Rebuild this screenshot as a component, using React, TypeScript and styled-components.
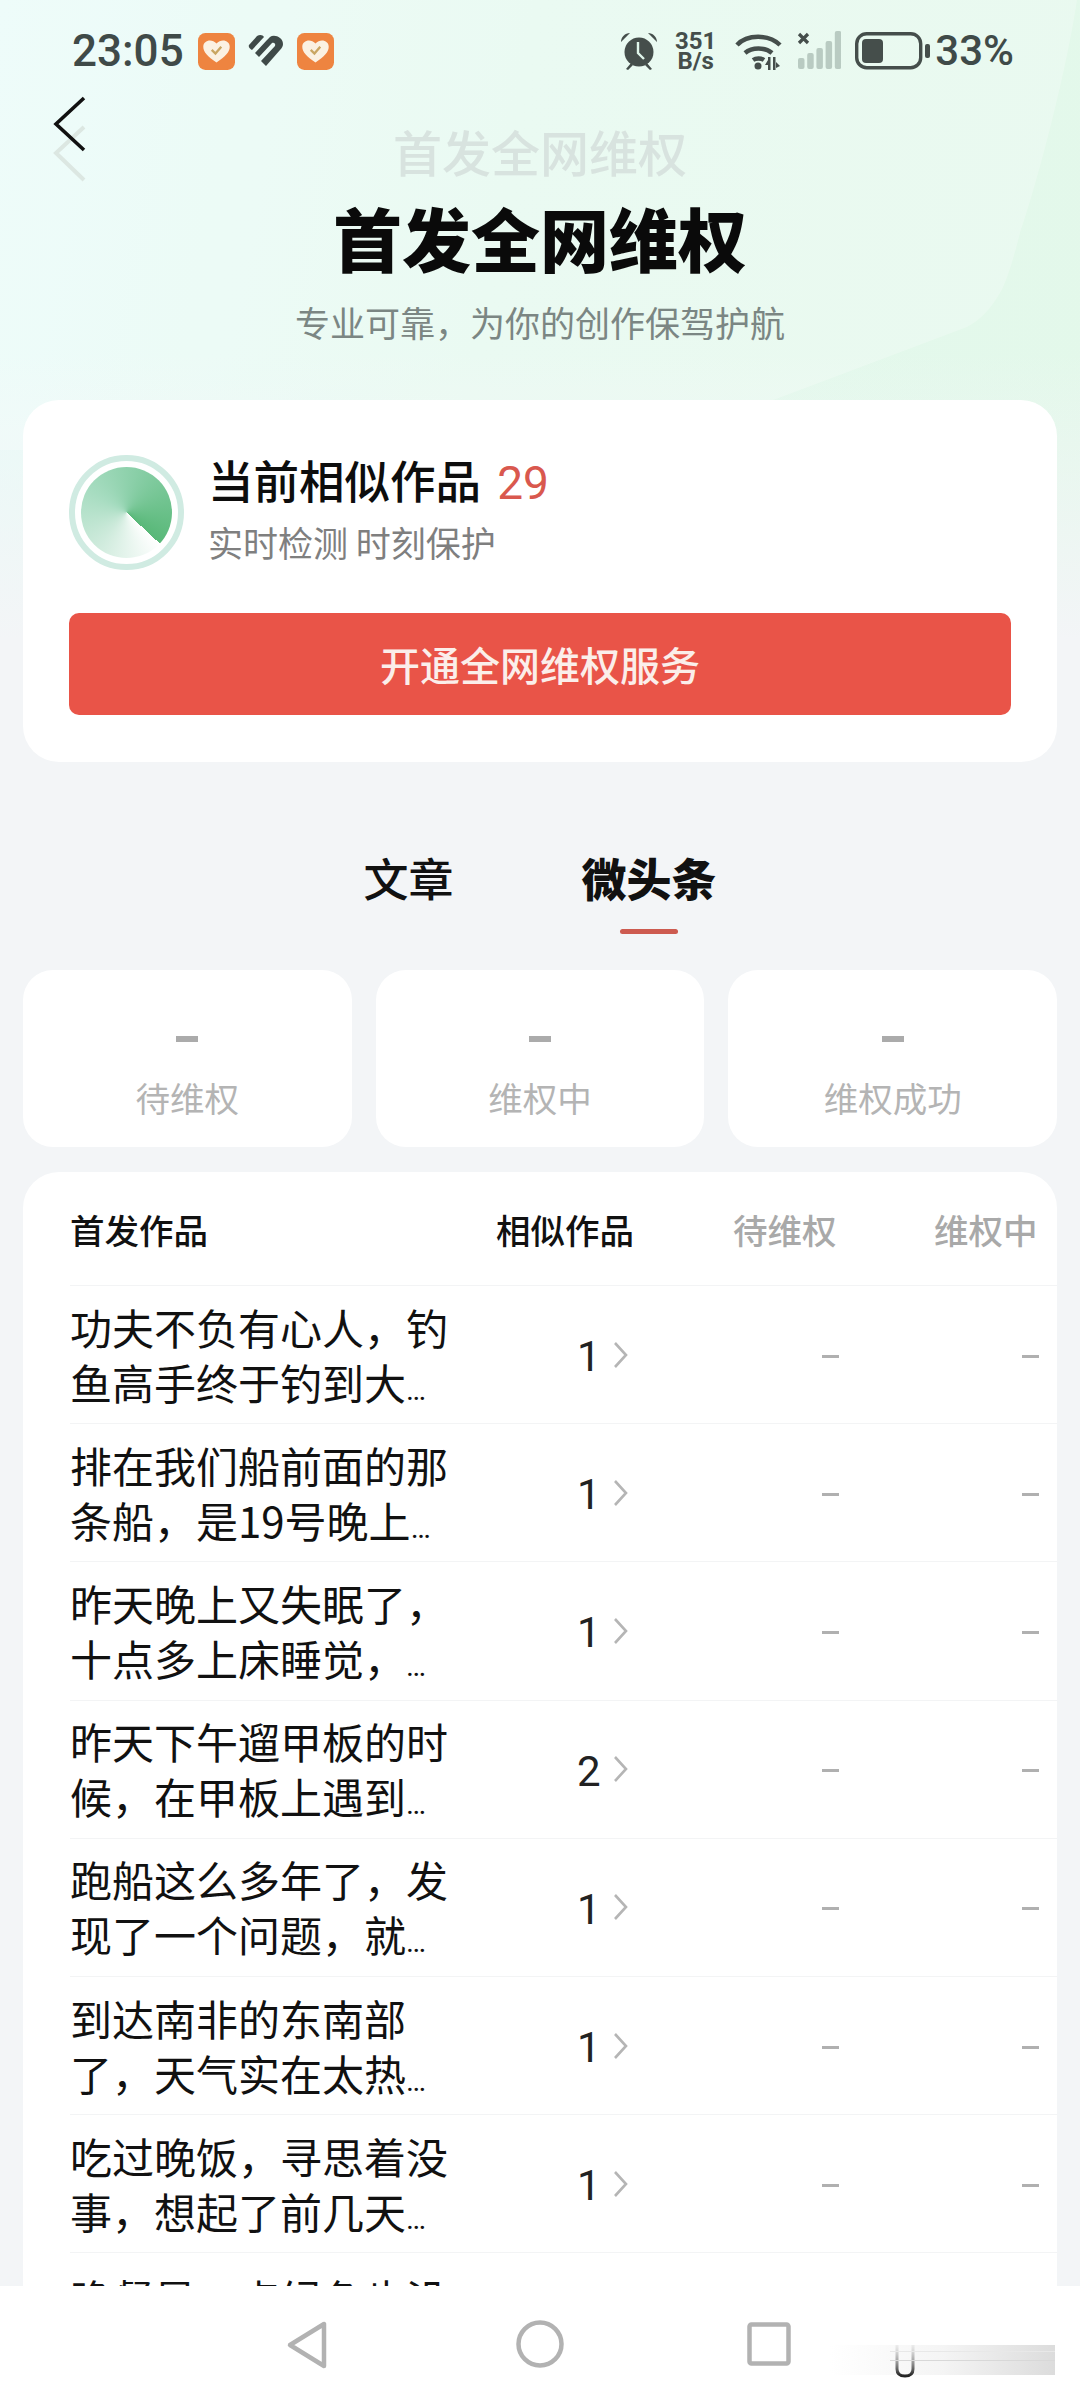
import React from "react";
import styled, { createGlobalStyle } from "styled-components";

const GlobalStyle = createGlobalStyle`
  html, body {
    margin: 0;
    padding: 0;
    background: #f3f5f7;
  }
  * {
    box-sizing: border-box;
  }
`;

const rows = [
  { text: "功夫不负有心人，钓鱼高手终于钓到大", count: 1 },
  { text: "排在我们船前面的那条船，是19号晚上", count: 1 },
  { text: "昨天晚上又失眠了，十点多上床睡觉，", count: 1 },
  { text: "昨天下午遛甲板的时候，在甲板上遇到", count: 2 },
  { text: "跑船这么多年了，发现了一个问题，就", count: 1 },
  { text: "到达南非的东南部了，天气实在太热", count: 1 },
  { text: "吃过晚饭，寻思着没事，想起了前几天", count: 1 },
  // last row is cut by the nav bar, only the top of its first line shows
  { text: "晚餐是一点绿色也没" },
];

const stats = ["待维权", "维权中", "维权成功"];

function HeartBadge() {
  return (
    <svg width="37" height="37" viewBox="0 0 35 35">
      <rect width="35" height="35" rx="7" fill="#ee8440" />
      <path d="M17.5 28C9 22 5 18 5 13c0-6 8-8 12.5-3C22 5 30 7 30 13c0 5-4 9-12.5 15z" fill="#fbf1e2" />
      <path d="M13 16l3.5 3.5L22 13" fill="none" stroke="#c9a662" strokeWidth="2.2" />
    </svg>
  );
}

function SplitHeart() {
  return (
    <svg width="38" height="36" viewBox="0 0 38 36" fill="#3f4a48">
      <path d="M2 12 10 3c3-2 6-1 7 1L5 17c-2-1-4-3-3-5z" />
      <path d="M8 20 20 7l3-3c4-3 13 0 13 7 0 2-1 4-3 6L19 33l-5-5 14-15c1-2-1-4-3-3L12 24z" />
    </svg>
  );
}

function Alarm() {
  return (
    <svg width="38" height="38" viewBox="0 0 38 38">
      <circle cx="19" cy="20" r="14.5" fill="#454e4b" />
      <path d="M1 10C1 5 5 1 10 1zM37 10c0-5-4-9-9-9zM6 37l5-6 2 2-5 5zM32 37l-5-6-2 2 5 5z" fill="#454e4b" />
      <path d="M18 10v11l6 6" fill="none" stroke="#dff5ea" strokeWidth="2.4" />
    </svg>
  );
}

function Wifi() {
  return (
    <svg width="48" height="38" viewBox="0 0 48 38">
      <g fill="none" stroke="#454e4b" strokeWidth="4.5">
        <path d="M2 13C12 2 34 2 45 13" />
        <path d="M10 21c7-6 20-6 27 0" />
        <path d="M18 28c3-2 8-2 11 0" />
      </g>
      <circle cx="23" cy="34" r="3.5" fill="#454e4b" />
      <path d="M33 38V25h2.5v13zM38 25h2.5v13H38zM30 33l3-5v5zM41 30l4 4-4 2z" fill="#454e4b" />
    </svg>
  );
}

function Signal() {
  return (
    <svg width="44" height="40" viewBox="0 0 44 40">
      <path d="M2 3l9 9M11 3 2 12" stroke="#454e4b" strokeWidth="3.2" />
      {[0, 1, 2, 3, 4].map((i) => (
        <rect key={i} x={1 + i * 9.2} y={[27, 22, 17, 10, 0][i]} width="6.5" height={[11, 16, 21, 28, 38][i]} rx="2" fill="#b9cbc2" />
      ))}
    </svg>
  );
}

function Battery() {
  return (
    <svg width="75" height="38" viewBox="0 0 75 38">
      <rect x="1.7" y="1.7" width="64" height="34" rx="10" fill="none" stroke="#454e4b" strokeWidth="3.4" />
      <rect x="7" y="7" width="21" height="24" rx="4" fill="#454e4b" />
      <rect x="70" y="12" width="5" height="14" rx="2" fill="#454e4b" />
    </svg>
  );
}

function RowChevron() {
  return (
    <svg width="16" height="28" viewBox="0 0 16 28">
      <path d="M2 2l11 12L2 26" fill="none" stroke="#b5b5b5" strokeWidth="2.6" />
    </svg>
  );
}

export default function App() {
  return (
    <>
      <GlobalStyle />
      <Page>
        <Scroller>
          <Hero>
            <HeroPanel width="1080" height="640" viewBox="0 0 1080 640">
              <path
                d="M0 0H1077C1065 80 1035 190 1020 233C1012 265 1005 285 1000 293C990 310 980 320 967 327L800 390L640 450H0Z"
                fill="#ffffff"
                fillOpacity="0.24"
              />
            </HeroPanel>
            <StatusBar>
              <ClockGroup>
                <Clock>23:05</Clock>
                <HeartBadge />
                <SplitHeart />
                <HeartBadge />
              </ClockGroup>
              <StatusGroup>
                <Alarm />
                <Speed>
                  351
                  <br />
                  B/s
                </Speed>
                <Wifi />
                <Signal />
                <Battery />
                <BatteryText>33%</BatteryText>
              </StatusGroup>
            </StatusBar>
            <GhostBack width="36" height="57" viewBox="0 0 36 57">
              <path d="M32 2 4 28l28 27" fill="none" stroke="#dce7e2" strokeWidth="4" />
            </GhostBack>
            <BackIcon width="36" height="56" viewBox="0 0 36 56">
              <path d="M32 2 4 28l28 26" fill="none" stroke="#111" strokeWidth="3.6" />
            </BackIcon>
            <GhostTitle>首发全网维权</GhostTitle>
            <HeroTitle>首发全网维权</HeroTitle>
            <HeroSubtitle>专业可靠，为你的创作保驾护航</HeroSubtitle>
          </Hero>
          <Content>
            <SummaryCard>
              <SummaryHead>
                <DialRing>
                  <DialDisc />
                </DialRing>
                <SummaryText>
                  <SummaryTitle>
                    当前相似作品 <SummaryCount>29</SummaryCount>
                  </SummaryTitle>
                  <SummaryHint>实时检测 时刻保护</SummaryHint>
                </SummaryText>
              </SummaryHead>
              <PrimaryButton>开通全网维权服务</PrimaryButton>
            </SummaryCard>
            <Tabs>
              <Tab>文章</Tab>
              <Tab $active>微头条</Tab>
            </Tabs>
            <StatGrid>
              {stats.map((label) => (
                <StatCard key={label}>
                  <StatDash />
                  <StatLabel>{label}</StatLabel>
                </StatCard>
              ))}
            </StatGrid>
            <TableCard>
              <HeaderRow>
                <HeadCell>首发作品</HeadCell>
                <HeadCell>相似作品</HeadCell>
                <HeadCell $muted>待维权</HeadCell>
                <HeadCell $muted>维权中</HeadCell>
              </HeaderRow>
              {rows.map((row) => (
                <BodyRow key={row.text}>
                  <RowTitle>
                    {row.text}
                    {row.count && <RowMore>…</RowMore>}
                  </RowTitle>
                  {row.count && (
                    <>
                      <RowCount>
                        {row.count}
                        <RowChevron />
                      </RowCount>
                      <RowDash />
                      <RowDash />
                    </>
                  )}
                </BodyRow>
              ))}
            </TableCard>
          </Content>
        </Scroller>
        <NavBar>
          <svg width="44" height="50" viewBox="0 0 44 50">
            <path d="M39 4v42L5 25z" fill="none" stroke="#b2b2b2" strokeWidth="4.5" strokeLinejoin="round" />
          </svg>
          <svg width="48" height="48" viewBox="0 0 48 48">
            <circle cx="24" cy="24" r="21.5" fill="none" stroke="#b2b2b2" strokeWidth="4.5" />
          </svg>
          <svg width="44" height="44" viewBox="0 0 44 44">
            <rect x="2.5" y="2.5" width="39" height="39" rx="2" fill="none" stroke="#b2b2b2" strokeWidth="4.5" />
          </svg>
          <Watermark>
            <WatermarkMark width="20" height="33" viewBox="0 0 20 33">
              <defs>
                <linearGradient id="markFade" x1="0" y1="0" x2="0" y2="1">
                  <stop offset="0" stopColor="#cfcfcf" stopOpacity="0.3" />
                  <stop offset="0.7" stopColor="#777" />
                  <stop offset="1" stopColor="#222" />
                </linearGradient>
              </defs>
              <path d="M2 0V24c0 5 3 7 8 7s8-2 8-7V0" fill="none" stroke="url(#markFade)" strokeWidth="3" />
            </WatermarkMark>
          </Watermark>
        </NavBar>
      </Page>
    </>
  );
}

const Page = styled.div`
  width: 1080px;
  height: 2400px;
  display: flex;
  flex-direction: column;
  overflow: hidden;
  background: #f3f5f7;
  font-family: "Noto Sans CJK SC", "Noto Sans", sans-serif;
`;

const Scroller = styled.div`
  flex: 1;
  min-height: 0;
  overflow: hidden;
`;

const Hero = styled.header`
  position: relative;
  height: 640px;
  margin-bottom: -240px;
  overflow: hidden;
  background: linear-gradient(180deg, rgba(243, 245, 247, 0) 55%, #f3f5f7 100%),
    linear-gradient(100deg, #e9fbf9 0%, #e4f9ee 45%, #e3f8ea 100%);
`;

const HeroPanel = styled.svg`
  position: absolute;
  top: 0;
  left: 0;
`;

const StatusBar = styled.div`
  position: relative;
  height: 100px;
  padding: 31px 66px 0 72px;
  display: flex;
  justify-content: space-between;
  align-items: flex-start;
`;

const StatusGroup = styled.div`
  display: flex;
  align-items: center;
  gap: 14px;
  height: 40px;
`;

const ClockGroup = styled(StatusGroup)`
  gap: 12px;
`;

const Clock = styled.span`
  font: 500 44px/40px Roboto, sans-serif;
  color: #3f4a48;
  margin-right: 2px;
`;

const Speed = styled.span`
  font: 700 24px/20px Roboto, sans-serif;
  color: #454e4b;
  text-align: center;
  margin: 0 5px 0 3px;
`;

const BatteryText = styled.span`
  font: 500 42px/40px Roboto, sans-serif;
  color: #3f4a48;
  margin-left: -9px;
`;

const BackIcon = styled.svg`
  position: absolute;
  left: 52px;
  top: 96px;
`;

const GhostBack = styled.svg`
  position: absolute;
  left: 52px;
  top: 125px;
`;

const GhostTitle = styled.div`
  position: relative;
  margin-top: 16px;
  text-align: center;
  font-size: 49px;
  line-height: 70px;
  font-weight: 500;
  color: #d8e3df;
`;

const HeroTitle = styled.h1`
  position: relative;
  margin: 6px 0 0;
  text-align: center;
  font-size: 69px;
  line-height: 90px;
  font-weight: 900;
  color: #0a0a0a;
`;

const HeroSubtitle = styled.p`
  position: relative;
  margin: 15px 0 0;
  text-align: center;
  font-size: 35px;
  line-height: 50px;
  color: #7b8683;
`;

const Content = styled.main`
  position: relative;
  padding: 0 23px;
`;

const SummaryCard = styled.section`
  background: #fff;
  border-radius: 36px;
  height: 362px;
  padding: 50px 46px 0;
`;

const SummaryHead = styled.div`
  display: flex;
  align-items: flex-start;
  gap: 24px;
  height: 163px;
`;

const DialRing = styled.div`
  flex: none;
  width: 115px;
  height: 115px;
  margin-top: 5px;
  border-radius: 50%;
  border: 6px solid #d0ebe2;
  padding: 6px;
  background: #fff;
`;

const DialDisc = styled.div`
  width: 100%;
  height: 100%;
  border-radius: 50%;
  background: conic-gradient(from 133deg, #ffffff 0deg, #cdeadb 90deg, #a6dcc0 170deg, #8acfa8 240deg, #58b878 360deg);
`;

const SummaryText = styled.div`
  padding-top: 1px;
`;

const SummaryTitle = styled.div`
  font-size: 45.5px;
  line-height: 56px;
  font-weight: 500;
  color: #0d0d0d;
`;

const SummaryCount = styled.span`
  font-family: Roboto, sans-serif;
  font-weight: 400;
  font-size: 46px;
  color: #d9584e;
  margin-left: 6px;
`;

const SummaryHint = styled.div`
  margin-top: 8px;
  font-size: 35px;
  line-height: 46px;
  color: #7f7f7f;
`;

const PrimaryButton = styled.button`
  display: block;
  width: 100%;
  height: 102px;
  border: 0;
  border-radius: 10px;
  background: #e95448;
  color: #fbeeea;
  font-family: inherit;
  font-size: 40px;
  font-weight: 500;
`;

const Tabs = styled.nav`
  display: flex;
  justify-content: center;
  align-items: flex-start;
  gap: 128px;
  height: 208px;
  padding-top: 84px;
`;

const Tab = styled.div<{ $active?: boolean }>`
  position: relative;
  font-size: 45px;
  line-height: 64px;
  font-weight: ${(p) => (p.$active ? 900 : 500)};
  color: #111;

  ${(p) =>
    p.$active &&
    `
    &::after {
      content: "";
      position: absolute;
      left: 50%;
      bottom: -24px;
      width: 58px;
      height: 5px;
      margin-left: -29px;
      border-radius: 3px;
      background: #cd5b50;
    }
  `}
`;

const StatGrid = styled.div`
  display: grid;
  grid-template-columns: repeat(3, 1fr);
  gap: 24px;
`;

const StatCard = styled.div`
  height: 177px;
  background: #fff;
  border-radius: 30px;
  display: flex;
  flex-direction: column;
  align-items: center;
  padding-top: 66px;
`;

const StatDash = styled.div`
  width: 22px;
  height: 6px;
  background: #ababab;
`;

const StatLabel = styled.div`
  margin-top: 31px;
  font-size: 34.5px;
  line-height: 48px;
  color: #b4b4b4;
`;

const TableCard = styled.section`
  margin-top: 25px;
  background: #fff;
  border-radius: 36px 36px 0 0;
  padding-left: 47px;
`;

const tableColumns = `
  display: grid;
  grid-template-columns: 426px 237px 201px 1fr;
  align-items: center;
`;

const HeaderRow = styled.div`
  ${tableColumns}
  height: 113px;
`;

const HeadCell = styled.div<{ $muted?: boolean }>`
  font-size: 34.5px;
  line-height: 48px;
  font-weight: 500;
  white-space: nowrap;
  color: ${(p) => (p.$muted ? "#a9a9a9" : "#111")};
`;

const BodyRow = styled.div`
  ${tableColumns}
  height: 138.2px;
  border-top: 1px solid #f3f4f5;
`;

const RowTitle = styled.div`
  width: 385px;
  min-height: 116px;
  padding-top: 6px;
  font-size: 42px;
  line-height: 55px;
  color: #111;
`;

const RowMore = styled.span`
  font-family: Roboto, sans-serif;
  font-size: 30px;
`;

const RowCount = styled.div`
  display: flex;
  align-items: center;
  gap: 12px;
  padding: 5px 0 0 81px;
  font: 400 42px/48px Roboto, sans-serif;
  color: #222;

  svg {
    margin-top: -5px;
  }
`;

const RowDash = styled.div`
  width: 17px;
  height: 3px;
  margin: 3px 0 0 89px;
  background: #b0b0b0;

  &:last-child {
    margin-left: 88px;
  }
`;

const NavBar = styled.nav`
  position: relative;
  flex: none;
  height: 114px;
  background: #fff;
  display: flex;
  align-items: flex-start;
  justify-content: center;
  gap: 187px;
  padding-top: 34px;

  svg:nth-child(3) {
    margin: 2px 4px 0 -4px;
  }
`;

const Watermark = styled.div`
  position: absolute;
  left: 830px;
  top: 59px;
  width: 225px;
  height: 30px;
  background: linear-gradient(90deg, rgba(232, 232, 232, 0), rgba(240, 240, 240, 0.7) 50%, #dcdcdc 100%);

  &::after {
    content: "";
    position: absolute;
    left: 60px;
    right: 0;
    top: 6px;
    height: 8px;
    border-top: 1px solid #e8e8e8;
    border-bottom: 1px solid #d8d8d8;
  }
`;

const WatermarkMark = styled.svg`
  position: absolute;
  left: 65px;
  top: 0;
`;
